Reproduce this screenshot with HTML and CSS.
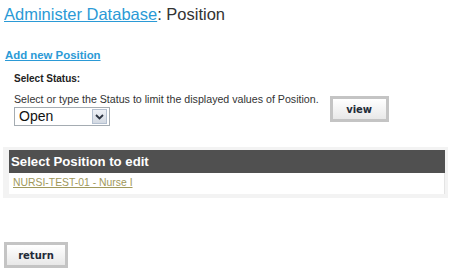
FILE: index.html
```html
<!DOCTYPE html>
<html>
<head>
<meta charset="utf-8">
<title>Administer Database: Position</title>
<link rel="stylesheet" href="styles.css">
</head>
<body>
<h1 class="title"><a href="#" class="title-link">Administer Database</a>: Position</h1>
<a href="#" class="add-link">Add new Position</a>
<div class="filter">
  <div class="filter-label">Select Status:</div>
  <div class="filter-row">
    <div class="filter-field">
      <p class="hint">Select or type the Status to limit the displayed values of Position.</p>
      <div class="select-wrap">
        <select class="select">
          <option>Open</option>
          <option>Closed</option>
        </select>
        <span class="select-arrow">
          <svg width="9" height="6" viewBox="0 0 9 6"><path d="M1 1 L4.5 4.5 L8 1" fill="none" stroke="#2b3340" stroke-width="1.8"/></svg>
        </span>
      </div>
    </div>
    <button class="btn btn-view">view</button>
  </div>
</div>
<div class="panel">
  <div class="panel-head">Select Position to edit</div>
  <div class="panel-body"><a href="#" class="item-link">NURSI-TEST-01 - Nurse I</a></div>
</div>
<button class="btn btn-return">return</button>
</body>
</html>
```
FILE: styles.css
```css
html, body {
  margin: 0;
  padding: 0;
  background: #ffffff;
}
body {
  font-family: "Liberation Sans", Arial, sans-serif;
  color: #333333;
  width: 453px;
}
.title {
  margin: 0;
  padding: 4px 0 0 4px;
  font-size: 16.5px;
  line-height: 21px;
  font-weight: normal;
  color: #333333;
}
.title-link {
  color: #2b9ad6;
  text-decoration: underline;
}
.add-link {
  display: block;
  margin: 24px 0 0 5px;
  font-size: 11.4px;
  line-height: 13px;
  font-weight: bold;
  color: #2b9ad6;
  width: max-content;
}
.filter {
  padding-left: 14px;
}
.filter-label {
  margin-top: 11px;
  font-size: 10px;
  line-height: 12px;
  font-weight: bold;
  color: #222222;
}
.filter-row {
  display: flex;
  align-items: flex-start;
  margin-top: 8px;
}
.hint {
  margin: 0;
  font-size: 10.65px;
  line-height: 13px;
  color: #333333;
}
.select-wrap {
  position: relative;
  margin-top: 1px;
  width: 96px;
  height: 19px;
}
.select {
  appearance: none;
  -webkit-appearance: none;
  box-sizing: border-box;
  width: 96px;
  height: 19px;
  margin: 0;
  padding: 0 0 0 4px;
  border: 1px solid #a5acb2;
  border-radius: 0;
  background: #ffffff;
  font-family: "Liberation Sans", Arial, sans-serif;
  font-size: 14px;
  line-height: 17px;
  color: #111111;
}
.select-arrow {
  position: absolute;
  top: 2px;
  right: 3px;
  width: 15px;
  height: 15px;
  box-sizing: border-box;
  border: 1px solid #b4c0d0;
  background: linear-gradient(#eef1f6, #d3d9e2);
  display: flex;
  align-items: center;
  justify-content: center;
  pointer-events: none;
}
.btn {
  box-sizing: border-box;
  height: 26px;
  border: 3px solid #c4c4c4;
  border-radius: 0;
  background: linear-gradient(#ffffff, #e8e8e8);
  font-family: "DejaVu Sans", Verdana, sans-serif;
  font-size: 10px;
  font-weight: bold;
  color: #222a38;
  padding: 0;
  cursor: pointer;
}
.btn-view {
  width: 59px;
  margin: 3px 0 0 11px;
}
.panel {
  margin: 21px 0 0 3px;
  width: 445px;
  box-sizing: border-box;
  background: #f3f3f3;
  padding: 3px 3px 4px 6px;
}
.panel-head {
  height: 23px;
  background: #505050;
  color: #ffffff;
  font-size: 13.2px;
  line-height: 23px;
  font-weight: bold;
  padding-left: 2px;
}
.panel-body {
  height: 21px;
  background: #ffffff;
  border-right: 1px solid #e4e4e4;
  padding-left: 4px;
  font-size: 10.4px;
  line-height: 20px;
}
.item-link {
  color: #a0985a;
  text-decoration: underline;
}
.btn-return {
  display: block;
  width: 64px;
  margin: 44px 0 0 4px;
}
```
